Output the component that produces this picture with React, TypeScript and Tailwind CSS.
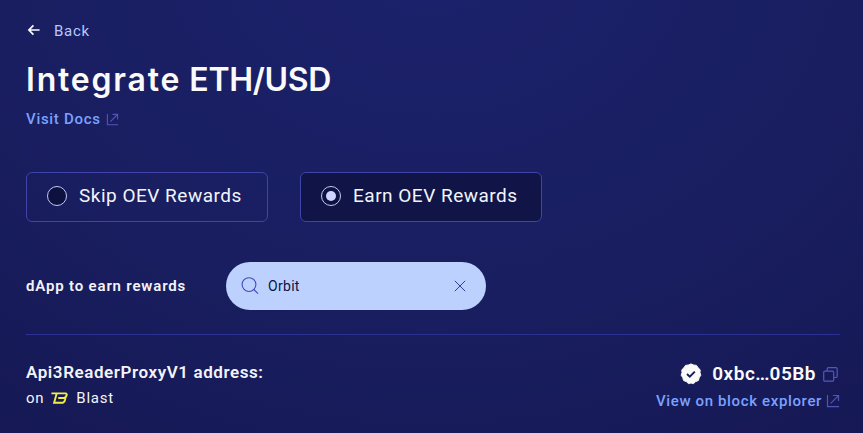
import type { ReactNode } from "react";

function ExternalLink({ size }: { size: number }) {
  return (
    <svg width={size} height={size} viewBox="0 0 14 14" fill="none" stroke="#5354b8" strokeWidth="1.2" className="shrink-0">
      <path d="M1.5 1v11.6H13M4.7 9.4 12.4 1.6M7 1.5h5.5V7" />
    </svg>
  );
}

function Option({ label, checked }: { label: ReactNode; checked?: boolean }) {
  return (
    <div className={`flex h-[50px] w-[242px] items-center rounded-md border border-[#4043a7] pl-5 ${checked ? "bg-[#101447]" : ""}`}>
      <span className="mb-0.5 flex size-5 shrink-0 items-center justify-center rounded-full border border-[#c4c8f5] bg-[#0d1140]">
        {checked && <span className="size-2.5 rounded-full bg-[#d0d2ff]" />}
      </span>
      <span className="mb-[3px] ml-3 whitespace-nowrap text-[19px] leading-6 tracking-[0.5px] text-[#f3f4fa]">{label}</span>
    </div>
  );
}

function VerifiedBadge() {
  return (
    <svg width="22" height="22" viewBox="0 0 22 22" className="shrink-0">
      <path
        fill="#fafafa"
        stroke="#fafafa"
        strokeLinejoin="round"
        d="M11 .9 13.6 2 16.5 2.4 18.1 4.8 20.2 6.8 20 9.6 20.8 12.3 19.2 14.7 18.4 17.5 15.7 18.6 13.5 20.6 11 20 8.5 20.6 6.3 18.6 3.6 17.5 2.8 14.7 1.2 12.3 2 9.6 1.8 6.8 3.9 4.8 5.5 2.4 8.4 2Z"
      />
      <path d="m7 11 2.8 2.7 5-5.1" fill="none" stroke="#171b5b" strokeWidth="1.9" />
    </svg>
  );
}

function BlastLogo() {
  return (
    <svg width="17" height="12" viewBox="0 0 17 12" fill="none" stroke="#f1ef43" strokeWidth="1.9" className="shrink-0">
      <path d="M.4 1.4h14.5l.9 1-.8 2.4-1.9 1.1 1.2 1-.8 2.5-1.7 1.3H3.1L5.7 1.6M7.2 6h6" />
    </svg>
  );
}

export default function App() {
  return (
    <main
      className="h-[433px] w-[863px] overflow-hidden bg-[radial-gradient(ellipse_760px_620px_at_430px_-60px,#1c226c_0%,#191e60_60%,#151853_100%)] pl-[26px] pr-[23px] text-[#f3f4fa]"
      style={{ fontFamily: 'Roboto, "Liberation Sans", sans-serif' }}
    >
      <div className="flex h-[61px] items-center">
        <svg width="14" height="14" viewBox="0 0 14 14" fill="none" stroke="#fafafa" strokeWidth="1.7" className="mb-0.5 ml-px">
          <path d="M12.6 7H2.2M6.4 2.3 1.9 7l4.5 4.7" />
        </svg>
        <span className="ml-[13px] text-[15px] leading-5 tracking-[0.75px] text-[#b7c8fb]">Back</span>
      </div>
      <h1 className="h-[46px] whitespace-nowrap font-[Inter] text-[32px] font-semibold leading-[38px] text-[#fafafa]">
        <span className="tracking-[1.8px]">Integrate</span> <span className="tracking-[-0.3px]">ETH/USD</span>
      </h1>
      <div className="flex h-6 items-center gap-[5px]">
        <span className="text-[15px] font-medium tracking-[0.7px] text-[#7ba1ff]">Visit Docs</span>
        <ExternalLink size={13} />
      </div>

      <div className="mt-[41px] flex gap-8">
        <Option label="Skip OEV Rewards" />
        <Option label="Earn OEV Rewards" checked />
      </div>

      <div className="mt-10 flex h-12 items-center">
        <span className="w-[200px] whitespace-nowrap text-[15px] font-semibold tracking-[0.83px]">dApp to earn rewards</span>
        <div className="flex h-12 w-[260px] items-center rounded-full bg-[#bdd1ff] pl-[15px] pr-5">
          <svg width="18" height="18" viewBox="0 0 18 18" fill="none" stroke="#4648b8" strokeWidth="1.1">
            <circle cx="8" cy="7.6" r="6.9" />
            <path d="m12.8 12.5 4.2 4.2" />
          </svg>
          <span className="ml-[9px] text-sm tracking-[0.3px] text-[#0c1143]">Orbit</span>
          <svg width="12" height="12" viewBox="0 0 12 12" stroke="#383c9e" strokeWidth="1" className="ml-auto">
            <path d="m.8.8 10.4 10.4M11.2.8.8 11.2" />
          </svg>
        </div>
      </div>

      <div className="mt-6 flex w-[814px] justify-between border-t border-[#2b3192]">
        <div className="pt-[25px]">
          <div className="whitespace-nowrap text-[17px] font-semibold leading-6 tracking-[0.58px]">Api3ReaderProxyV1 address:</div>
          <div className="mt-0.5 flex h-6 items-center text-[15px] tracking-[0.75px]">
            <span>on</span>
            <span className="ml-[7px]"><BlastLogo /></span>
            <span className="ml-2">Blast</span>
          </div>
        </div>
        <div className="flex flex-col items-end pt-[27px]">
          <div className="flex h-6 items-center">
            <VerifiedBadge />
            <span className="ml-2.5 whitespace-nowrap text-[19px] font-semibold leading-6 tracking-[0.5px] text-[#fafafa]">
              0xbc<span className="tracking-[-1px]">...</span><span className="ml-px">05Bb</span>
            </span>
            <svg width="15" height="15" viewBox="0 0 15 15" fill="none" stroke="#5657be" strokeWidth="1.2" className="ml-[7px] mr-0.5">
              <rect x=".7" y="4.2" width="10" height="10" rx="1.3" />
              <path d="M4.2 4.1V2c0-.8.5-1.3 1.3-1.3h7.4c.8 0 1.3.5 1.3 1.3v7.2c0 .8-.5 1.3-1.3 1.3h-2.1" />
            </svg>
          </div>
          <div className="mt-[3px] flex h-6 items-center gap-1">
            <span className="whitespace-nowrap text-[15px] font-medium tracking-[0.64px] text-[#7ba1ff]">View on block explorer</span>
            <ExternalLink size={14} />
          </div>
        </div>
      </div>
    </main>
  );
}
